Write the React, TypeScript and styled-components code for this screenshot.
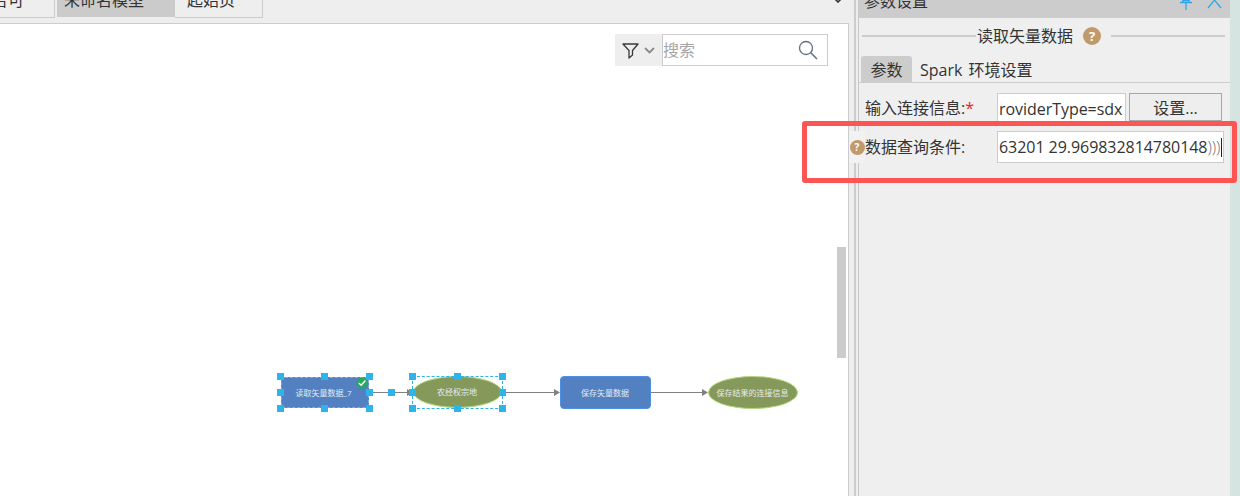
import React from 'react'
import styled, { createGlobalStyle } from 'styled-components'

const FONT = `"Open Sans", "Noto Sans CJK SC", sans-serif`

const GlobalStyle = createGlobalStyle`
    html, body {
        margin: 0;
        padding: 0;
        background: #ffffff;
    }
`

const Page = styled.div`
    position: relative;
    display: flex;
    width: 1240px;
    height: 496px;
    overflow: hidden;
    font-family: ${FONT};
    font-size: 16px;
    color: #333333;
    background: #d5e4e0;
`

const LeftPane = styled.div`
    display: flex;
    flex-direction: column;
    width: 849px;
    flex-shrink: 0;
`

const TabStrip = styled.div`
    display: flex;
    align-items: flex-end;
    height: 18px;
    background: #eeeeee;
    overflow: hidden;
`

const Tab = styled.div<{ $w: number; $active?: boolean; $gap?: number; $align?: string; $pr?: number }>`
    display: flex;
    justify-content: ${({ $align }) => $align ?? 'flex-start'};
    flex-shrink: 0;
    box-sizing: border-box;
    width: ${({ $w }) => $w}px;
    height: ${({ $active }) => ($active ? 29 : 30)}px;
    margin-left: ${({ $gap }) => $gap ?? 0}px;
    margin-bottom: ${({ $active }) => ($active ? 1 : 0)}px;
    padding-left: ${({ $align }) => ($align ? 0 : 7)}px;
    padding-right: ${({ $pr }) => $pr ?? 0}px;
    line-height: 18px;
    white-space: nowrap;
    background: ${({ $active }) => ($active ? '#cbcbcb' : '#eeeeee')};
    border-bottom: ${({ $active }) => ($active ? 'none' : '1px solid #cccccc')};
    border-right: ${({ $active }) => ($active ? 'none' : '1px solid #cccccc')};
`

const TabLabel = styled.span<{ $indent?: number }>`
    display: block;
    flex-shrink: 0;
    padding-top: 3px;
    padding-left: ${({ $indent }) => $indent ?? 0}px;
`

const TabClose = styled.span`
    margin-left: 7px;
    padding-top: 4px;
    line-height: 0;
    color: #f4f4f4;
`

const TabFill = styled.div`
    flex: 1;
    height: 100%;
    position: relative;
`

const StripChevron = styled.svg`
    position: absolute;
    right: 6px;
    top: -3px;
`

const ToolRow = styled.div`
    height: 5px;
    background: #eeeeee;
    border-bottom: 1px solid #cccccc;
`

const Canvas = styled.div`
    position: relative;
    flex: 1;
    background: #ffffff;
    border-right: 1px solid #cccccc;
`

const SearchBar = styled.div`
    position: absolute;
    left: 615px;
    top: 10px;
    display: flex;
    height: 32px;
`

const FilterButton = styled.div`
    display: flex;
    align-items: center;
    gap: 5px;
    box-sizing: border-box;
    width: 47px;
    padding-left: 7px;
    background: #eeeeee;
`

const SearchBox = styled.div`
    display: flex;
    align-items: center;
    justify-content: space-between;
    box-sizing: border-box;
    width: 166px;
    padding: 0 9px 0 0;
    background: #ffffff;
    border: 1px solid #cccccc;
    color: #a6a6a6;
`

const SearchHint = styled.span`
    margin-top: -3px;
`

const Scrollbar = styled.div`
    position: absolute;
    left: 837px;
    top: 223px;
    width: 9px;
    height: 111px;
    background: #cccccc;
`

const Wires = styled.svg`
    position: absolute;
    left: 0;
    top: 0;
`

const Node = styled.div<{ $x: number; $y: number; $w: number; $h: number; $kind: 'rect' | 'ellipse'; $dashed?: boolean }>`
    position: absolute;
    left: ${({ $x }) => $x}px;
    top: ${({ $y }) => $y}px;
    display: flex;
    align-items: center;
    justify-content: center;
    box-sizing: border-box;
    width: ${({ $w }) => $w}px;
    height: ${({ $h }) => $h}px;
    padding-right: ${({ $dashed }) => ($dashed ? 3 : 1)}px;
    padding-bottom: 1px;
    font-size: 8px;
    white-space: nowrap;
    color: #e6ebf2;
    background: ${({ $kind }) => ($kind === 'rect' ? '#5380c0' : '#84995a')};
    border-radius: ${({ $kind }) => ($kind === 'rect' ? '4px' : '50%')};
    border: ${({ $kind, $dashed }) =>
        $dashed ? '1px dashed #86a9de' : $kind === 'rect' ? '1px solid #4b90e2' : '1px solid #b4d67c'};
`

const Selection = styled.div<{ $x: number; $y: number; $w: number; $h: number }>`
    position: absolute;
    left: ${({ $x }) => $x}px;
    top: ${({ $y }) => $y}px;
    box-sizing: border-box;
    width: ${({ $w }) => $w}px;
    height: ${({ $h }) => $h}px;
    border: 1px dashed #2db4e8;
`

const Handle = styled.span<{ $x: number; $y: number }>`
    position: absolute;
    left: ${({ $x }) => $x - 3.5}px;
    top: ${({ $y }) => $y - 3.5}px;
    width: 7px;
    height: 7px;
    background: #2db4e8;
`

const CheckBadge = styled.svg`
    position: absolute;
    left: 356px;
    top: 353px;
`

const Splitter = styled.div`
    flex-shrink: 0;
    box-sizing: border-box;
    width: 10px;
    background: linear-gradient(
        to right,
        #eeeeee 0 5px,
        #cccccc 5px 7px,
        #eeeeee 7px 9px,
        #c8c8c8 9px 10px
    );
`

const RightPane = styled.div`
    display: flex;
    flex-direction: column;
    width: 371px;
    flex-shrink: 0;
    background: #efefef;
`

const PanelHeader = styled.div`
    position: relative;
    display: flex;
    align-items: flex-end;
    box-sizing: border-box;
    height: 18px;
    padding: 0 0 8px 5px;
    line-height: 18px;
    background: #cccccc;
    overflow: hidden;
`

const PanelActions = styled.div`
    position: absolute;
    right: 8px;
    top: -3px;
    display: flex;
    gap: 14px;
`

const TitleRow = styled.div`
    display: flex;
    align-items: center;
    height: 36px;
    padding: 0 5px 0 3px;
`

const TitleLine = styled.div`
    flex: 1;
    height: 2px;
    background: #cccccc;
`

const TitleText = styled.span`
    margin: 0 10px 0 1px;
    line-height: 18px;
`

const HelpDot = styled.span<{ $size: number; $gap?: number }>`
    display: inline-flex;
    align-items: center;
    justify-content: center;
    width: ${({ $size }) => $size}px;
    height: ${({ $size }) => $size}px;
    margin-right: ${({ $gap }) => $gap ?? 0}px;
    border-radius: 50%;
    background: #c19a6b;
    color: #ffffff;
    font-size: ${({ $size }) => $size - 5}px;
    font-weight: 700;
    line-height: 1;
`

const ParamTabs = styled.div`
    display: flex;
    align-items: flex-end;
    gap: 8px;
    box-sizing: border-box;
    height: 29px;
    padding-left: 2px;
    border-bottom: 1px solid #cccccc;
`

const ParamTab = styled.div<{ $active?: boolean }>`
    box-sizing: border-box;
    width: ${({ $active }) => ($active ? '51px' : 'auto')};
    height: 26px;
    line-height: 28px;
    text-align: center;
    word-spacing: 2px;
    background: ${({ $active }) => ($active ? '#cccccc' : 'transparent')};
    border-radius: 3px 3px 0 0;
`

const FormRow = styled.div<{ $top: number }>`
    position: relative;
    display: flex;
    align-items: flex-start;
    margin-top: ${({ $top }) => $top}px;
    padding-left: 6px;
`

const FieldLabel = styled.label<{ $lh: number }>`
    width: 132px;
    flex-shrink: 0;
    line-height: ${({ $lh }) => $lh}px;
    white-space: nowrap;
`

const Required = styled.span`
    color: #ee2222;
`

const Field = styled.div<{ $w: number }>`
    display: flex;
    align-items: center;
    box-sizing: border-box;
    width: ${({ $w }) => $w}px;
    height: 32px;
    padding-left: 1px;
    background: #ffffff;
    border: 1px solid #cccccc;
    white-space: nowrap;
    overflow: hidden;
    letter-spacing: -0.05px;
`

const FaintText = styled.span`
    color: #6f6f6f;
    font-weight: 300;
`

const Caret = styled.span`
    flex-shrink: 0;
    width: 1px;
    height: 19px;
    margin-left: 1px;
    background: #222222;
`

const SetupButton = styled.div`
    display: flex;
    align-items: center;
    justify-content: center;
    box-sizing: border-box;
    width: 93px;
    height: 28px;
    margin-left: 3px;
    background: #eeeeee;
    border: 1px solid #a8a8a8;
`

const RowHelp = styled.div`
    position: absolute;
    left: -10px;
    top: 0;
    display: flex;
    align-items: center;
    justify-content: center;
    width: 16px;
    height: 32px;
    background: #f2f2f2;
`

const Callout = styled.div`
    position: absolute;
    left: 802px;
    top: 121px;
    box-sizing: border-box;
    width: 435px;
    height: 62px;
    border: 5px solid #fd5454;
    border-radius: 3px;
`

type Spot = [number, number]

const handlesFor = (xs: number[], ys: number[]): Spot[] => [
    [xs[0], ys[0]], [xs[1], ys[0]], [xs[2], ys[0]],
    [xs[0], ys[1]], [xs[2], ys[1]],
    [xs[0], ys[2]], [xs[1], ys[2]], [xs[2], ys[2]],
]

// canvas starts 24px down the page
const Y = (pageY: number) => pageY - 24

const App: React.FunctionComponent = () => {
    const handles: Spot[] = [
        ...handlesFor([280.5, 324.5, 369.5], [Y(376.5), Y(392.5), Y(408.5)]),
        ...handlesFor([412.5, 457.5, 502.5], [Y(376.5), Y(392.5), Y(408.5)]),
        [391.5, Y(392.5)],
    ]

    return (
        <Page>
            <GlobalStyle />
            <LeftPane>
                <TabStrip>
                    <Tab $w={55} $align="flex-end" $pr={30}>
                        <TabLabel>告可</TabLabel>
                    </Tab>
                    <Tab $w={118} $gap={2} $active>
                        <TabLabel>未命名模型</TabLabel>
                        <TabClose>
                            <svg width="10" height="10" viewBox="0 0 10 10">
                                <path d="M1 0 L9 8 M9 0 L1 8" stroke="currentColor" strokeWidth="1" fill="none" />
                            </svg>
                        </TabClose>
                    </Tab>
                    <Tab $w={88}>
                        <TabLabel $indent={5}>起始页</TabLabel>
                    </Tab>
                    <TabFill>
                        <StripChevron width="10" height="6" viewBox="0 0 10 6">
                            <path d="M1 1 L5 5 L9 1" stroke="#333333" strokeWidth="1.6" fill="none" />
                        </StripChevron>
                    </TabFill>
                </TabStrip>
                <ToolRow />
                <Canvas>
                    <SearchBar>
                        <FilterButton>
                            <svg width="17" height="17" viewBox="0 0 17 17">
                                <path
                                    d="M1 2 H16 L10.5 8.5 V13 L7 16 V8.5 Z"
                                    stroke="#3a3a3a"
                                    strokeWidth="1.3"
                                    strokeLinejoin="round"
                                    fill="none"
                                />
                            </svg>
                            <svg width="11" height="7" viewBox="0 0 11 7">
                                <path d="M1 1 L5.5 5.5 L10 1" stroke="#8a8a8a" strokeWidth="1.8" fill="none" />
                            </svg>
                        </FilterButton>
                        <SearchBox>
                            <SearchHint>搜索</SearchHint>
                            <svg width="20" height="20" viewBox="0 0 20 20">
                                <circle cx="8" cy="8" r="6.5" stroke="#5b6f86" strokeWidth="1.3" fill="none" />
                                <path d="M12.8 12.8 L19 19" stroke="#5b6f86" strokeWidth="1.5" fill="none" />
                            </svg>
                        </SearchBox>
                    </SearchBar>
                    <Scrollbar />
                    <Wires width="848" height="472" viewBox="0 0 848 472">
                        <g stroke="#808080" strokeWidth="1" fill="none">
                            <path d={`M369 ${Y(392.5)} H408`} />
                            <path d={`M502 ${Y(392.5)} H555`} />
                            <path d={`M650 ${Y(392.5)} H703`} />
                        </g>
                        <g fill="#808080">
                            <path d={`M407 ${Y(389)} L413 ${Y(392.5)} L407 ${Y(396)} Z`} />
                            <path d={`M554 ${Y(389)} L560 ${Y(392.5)} L554 ${Y(396)} Z`} />
                            <path d={`M702 ${Y(389)} L708 ${Y(392.5)} L702 ${Y(396)} Z`} />
                        </g>
                    </Wires>
                    <Node $x={281} $y={Y(377)} $w={88} $h={31} $kind="rect" $dashed>读取矢量数据_7</Node>
                    <Node $x={413} $y={Y(376)} $w={89} $h={32} $kind="ellipse">农经权宗地</Node>
                    <Node $x={560} $y={Y(376)} $w={91} $h={33} $kind="rect">保存矢量数据</Node>
                    <Node $x={708} $y={Y(376)} $w={90} $h={33} $kind="ellipse">保存结果的连接信息</Node>
                    <Selection $x={412} $y={Y(376)} $w={91} $h={33} />
                    {handles.map(([x, y]) => (
                        <Handle key={`${x}-${y}`} $x={x} $y={y} />
                    ))}
                    <CheckBadge width="12" height="12" viewBox="0 0 12 12">
                        <circle cx="6" cy="6" r="5.5" fill="#27a85f" />
                        <path d="M2.8 6 L5.2 8.2 L9.4 3.6" stroke="#ffffff" strokeWidth="1.5" fill="none" />
                    </CheckBadge>
                </Canvas>
            </LeftPane>
            <Splitter />
            <RightPane>
                <PanelHeader>
                    参数设置
                    <PanelActions>
                        <svg width="14" height="13" viewBox="0 0 14 13">
                            <path d="M4 0 V5 M10 0 V5 M4 3.5 H10 M1 5.5 H13 M7 5.5 V13" stroke="#2ea6e8" strokeWidth="1.3" fill="none" />
                        </svg>
                        <svg width="15" height="13" viewBox="0 0 15 13">
                            <path d="M1 11 L7.5 3 L14 11 M1 -5 L14 11" stroke="#2ea6e8" strokeWidth="1.2" fill="none" />
                        </svg>
                    </PanelActions>
                </PanelHeader>
                <TitleRow>
                    <TitleLine />
                    <TitleText>读取矢量数据</TitleText>
                    <HelpDot $size={18} $gap={10}>?</HelpDot>
                    <TitleLine />
                </TitleRow>
                <ParamTabs>
                    <ParamTab $active>参数</ParamTab>
                    <ParamTab>Spark 环境设置</ParamTab>
                </ParamTabs>
                <FormRow $top={10}>
                    <FieldLabel $lh={30}>
                        输入连接信息:<Required>*</Required>
                    </FieldLabel>
                    <Field $w={129}>roviderType=sdx</Field>
                    <SetupButton>设置...</SetupButton>
                </FormRow>
                <FormRow $top={6}>
                    <RowHelp>
                        <HelpDot $size={15}>?</HelpDot>
                    </RowHelp>
                    <FieldLabel $lh={32}>数据查询条件:</FieldLabel>
                    <Field $w={227}>
                        63201 29.969832814780148<FaintText>)))</FaintText>
                        <Caret />
                    </Field>
                </FormRow>
            </RightPane>
            <Callout />
        </Page>
    )
}

export default App
